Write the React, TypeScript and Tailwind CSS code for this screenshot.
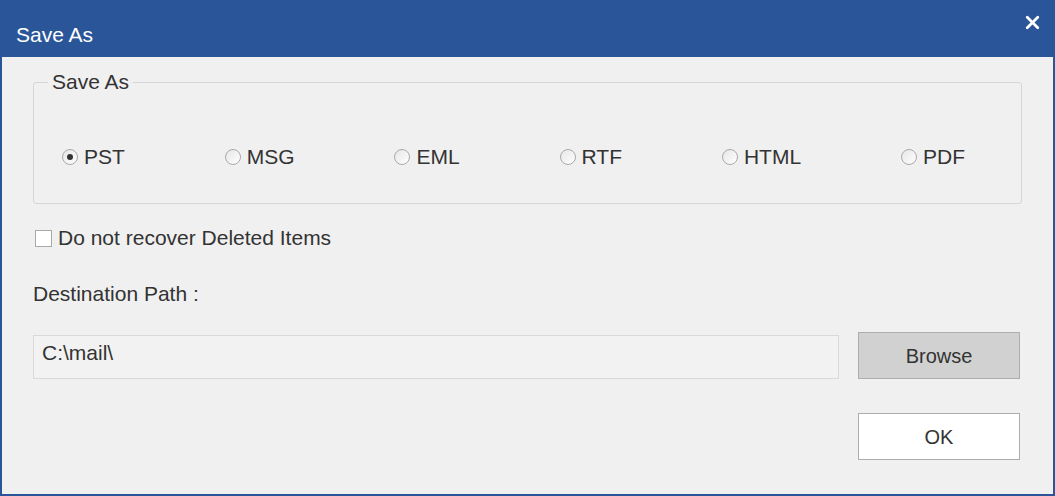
import { X } from 'lucide-react';

const formats = ['PST', 'MSG', 'EML', 'RTF', 'HTML', 'PDF'];

function Radio({ checked }: { checked?: boolean }) {
  return (
    <span className="w-4 h-4 rounded-full border border-[#a9a9a9] bg-gradient-to-br from-[#e6e6e6] to-white flex items-center justify-center shrink-0">
      {checked && <span className="w-[6px] h-[6px] rounded-full bg-[#333]" />}
    </span>
  );
}

export default function App() {
  return (
    <div
      className="w-[1055px] h-[496px] flex flex-col border-x-2 border-b-2 border-[#2a5699] bg-[#f0f0f0] text-[#333]"
      style={{ fontFamily: '"Liberation Sans", Arial, sans-serif' }}
    >
      {/* Title bar */}
      <div className="h-[57px] -mx-[2px] bg-[#2a5699] flex items-start justify-between pl-[16px] pr-[12px]">
        <span className="text-white text-[21px] leading-6 mt-[23px]">Save As</span>
        <X className="text-white mt-[12px]" size={21} strokeWidth={3.2} />
      </div>

      {/* Body */}
      <div className="flex-1 flex flex-col px-[31px] pt-[13px]">
        <fieldset className="border border-[#d6d6d6] rounded-[3px] px-[14px] pt-[51px] pb-[34px]">
          <legend className="px-1 text-[21px] leading-6">Save As</legend>
          <div className="flex justify-between items-center pl-[14px] pr-[42px]">
            {formats.map((f, i) => (
              <label key={f} className="flex items-center gap-[6px] text-[21px] leading-6">
                <Radio checked={i === 0} />
                {f}
              </label>
            ))}
          </div>
        </fieldset>

        <label className="flex items-center gap-[6px] mt-[22px] ml-[2px] text-[21px] leading-6">
          <span className="w-[17px] h-[17px] border border-[#a9a9a9] bg-white shrink-0" />
          Do not recover Deleted Items
        </label>

        <div className="mt-[32px] text-[21px] leading-6">Destination Path :</div>

        <div className="flex items-end gap-[19px] mt-[26px]">
          <div className="flex-1 h-[44px] border border-[#d9d9d9] bg-[#f2f2f2] px-[8px] pt-[5px] text-[21px] leading-6">
            C:\mail\
          </div>
          <button className="w-[162px] h-[47px] mr-[2px] border border-[#adadad] bg-[#d1d1d1] text-[20px] text-[#333]">
            Browse
          </button>
        </div>

        <div className="flex justify-end mt-[34px]">
          <button className="w-[162px] h-[47px] mr-[2px] border border-[#adadad] bg-white text-[20px] text-[#333]">
            OK
          </button>
        </div>
      </div>
    </div>
  );
}
